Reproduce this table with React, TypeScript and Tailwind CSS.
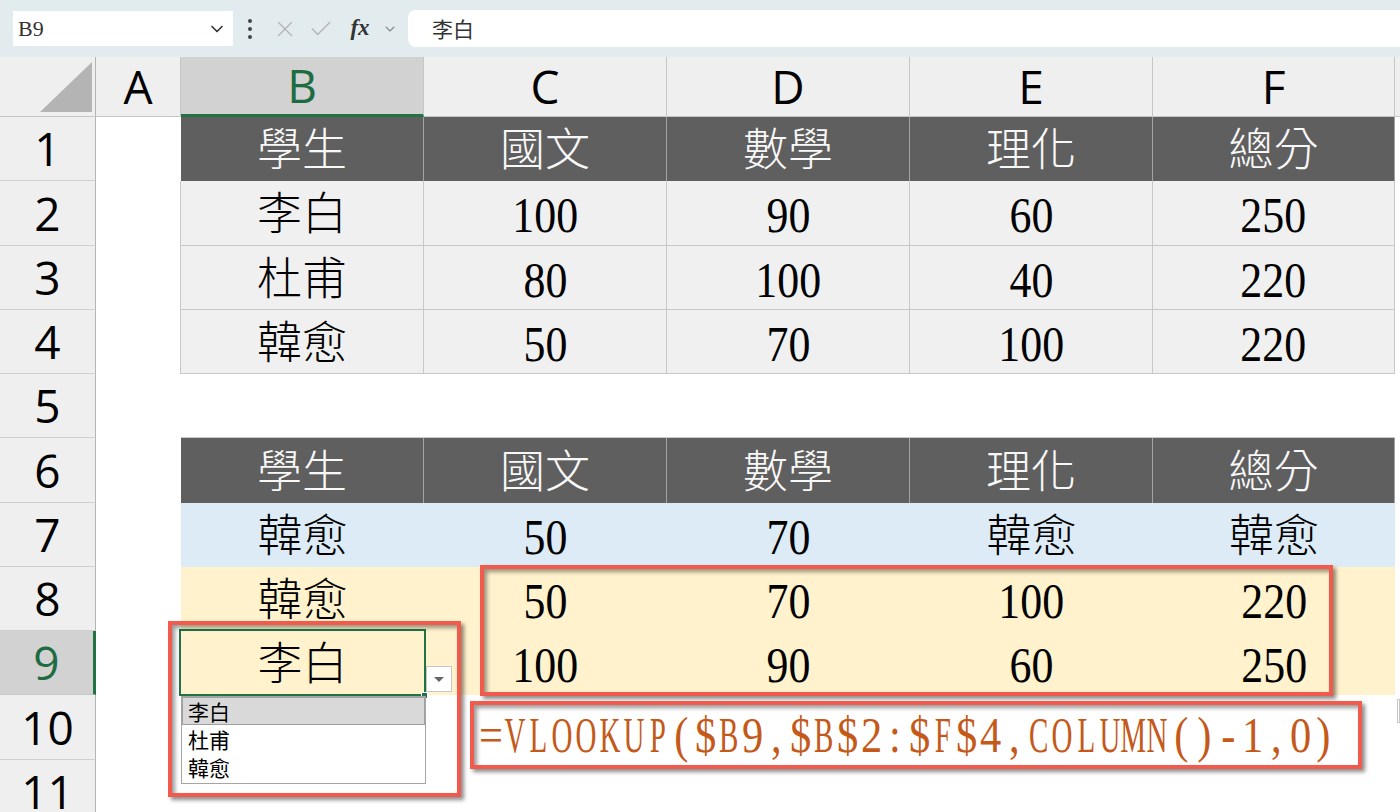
import React from "react";
import { Check, ChevronDown, X } from "lucide-react";

type Kind = "dark" | "gray" | "gap" | "blue" | "yellow" | "blank";

// rows 1..11 of the sheet
const rows: { kind: Kind; cells: string[] }[] = [
  { kind: "dark", cells: ["學生", "國文", "數學", "理化", "總分"] },
  { kind: "gray", cells: ["李白", "100", "90", "60", "250"] },
  { kind: "gray", cells: ["杜甫", "80", "100", "40", "220"] },
  { kind: "gray", cells: ["韓愈", "50", "70", "100", "220"] },
  { kind: "gap", cells: ["", "", "", "", ""] },
  { kind: "dark", cells: ["學生", "國文", "數學", "理化", "總分"] },
  { kind: "blue", cells: ["韓愈", "50", "70", "韓愈", "韓愈"] },
  { kind: "yellow", cells: ["韓愈", "50", "70", "100", "220"] },
  { kind: "yellow", cells: ["李白", "100", "90", "60", "250"] },
  { kind: "blank", cells: ["", "", "", "", ""] },
  { kind: "blank", cells: ["", "", "", "", ""] },
];

const cellClass: Record<Kind, string> = {
  dark: "bg-[#5f5f5f] text-[#f8f8f8] border-r border-[#a3a3a3]",
  gray: "bg-[#f0f0f0] text-black border-r border-b border-[#c8c8c8]",
  gap: "bg-white border-b border-[#c8c8c8]",
  blue: "bg-[#ddebf7] text-black",
  yellow: "bg-[#fff2cc] text-black",
  blank: "bg-white",
};

const colLetters = ["A", "B", "C", "D", "E", "F"];
const FORMULA = "=VLOOKUP($B9,$B$2:$F$4,COLUMN()-1,0)";

function Val({ v }: { v: string }) {
  if (!v) return null;
  if (/^\d+$/.test(v)) {
    return <span className="inline-block scale-x-[0.86] text-[51px] leading-none">{v}</span>;
  }
  return <span className="text-[45px] leading-none font-light">{v}</span>;
}

function FormulaBar() {
  return (
    <div className="h-[57px] bg-[#e2ebee] flex items-center">
      <div className="ml-[13px] w-[220px] h-[35px] bg-white flex items-center justify-between pl-[5px] pr-[6px]">
        <span className="font-['Liberation_Serif'] text-[22px] text-[#333]">B9</span>
        <ChevronDown size={20} strokeWidth={2} className="text-[#333]" />
      </div>
      <div className="w-[34px] flex flex-col items-center gap-[4px]">
        <span className="w-[4px] h-[4px] rounded-full bg-[#444]" />
        <span className="w-[4px] h-[4px] rounded-full bg-[#444]" />
        <span className="w-[4px] h-[4px] rounded-full bg-[#444]" />
      </div>
      <div className="w-[36px] flex justify-center">
        <X size={26} strokeWidth={1.3} className="text-[#b5b5b5]" />
      </div>
      <div className="w-[36px] flex justify-center">
        <Check size={26} strokeWidth={1.3} className="text-[#b5b5b5]" />
      </div>
      <div className="w-[42px] flex justify-center">
        <span className="font-['Liberation_Serif'] italic font-bold text-[23px] text-[#333]">fx</span>
      </div>
      <div className="w-[17px] flex justify-center">
        <ChevronDown size={16} strokeWidth={1.6} className="text-[#888]" />
      </div>
      <div className="ml-[10px] flex-1 h-[37px] bg-white rounded-l-[8px] flex items-center pl-[24px]">
        <span className="font-['Noto_Sans_CJK_TC',sans-serif] text-[21px] text-[#333]">李白</span>
      </div>
    </div>
  );
}

function SelectedCell() {
  return (
    <div className="relative bg-[#fff2cc] flex items-center justify-center pt-[5px]">
      <Val v="李白" />
      <div className="absolute -left-[2px] -top-[2px] -right-[2px] -bottom-[1px] border-2 border-[#217346]" />
      <div className="absolute -right-[4px] -bottom-[4px] w-[7px] h-[7px] bg-[#217346] border border-white" />
      <div className="absolute left-[245px] top-[35px] w-[26px] h-[26px] bg-white border border-[#c8c8c8] flex items-center justify-center z-10">
        <span className="w-0 h-0 border-l-[5px] border-r-[5px] border-t-[5px] border-l-transparent border-r-transparent border-t-[#666]" />
      </div>
      <div className="absolute left-0 top-[65px] w-[245px] h-[88px] bg-white border border-[#a5a5a5] z-10 font-['Noto_Sans_CJK_TC',sans-serif] text-[21px] leading-[28px] text-black">
        <div className="h-[28px] bg-[#d9d9d9] border border-[#a0a0a0] pl-[5px] leading-[26px]">李白</div>
        <div className="h-[28px] pl-[6px]">杜甫</div>
        <div className="h-[28px] pl-[6px]">韓愈</div>
      </div>
    </div>
  );
}

export default function App() {
  return (
    <div className="relative w-[1400px] h-[812px] overflow-hidden bg-white font-['Liberation_Serif','Noto_Sans_CJK_TC',serif]">
      <FormulaBar />

      <div className="grid grid-cols-[96px_85px_243px_243px_243px_243px_242px_5px] grid-rows-[60px_64px_65px_64px_64px_64px_65px_64px_64px_64px_65px_64px]">
        {/* column headers */}
        <div className="relative bg-[#efefef] border-r border-b border-r-[#b4b4b4] border-b-[#c6c6c6]">
          <svg className="absolute left-0 top-0" width="96" height="60">
            <polygon points="40,55 92,55 92,5" fill="#b4b4b4" />
          </svg>
        </div>
        {colLetters.map((c) =>
          c === "B" ? (
            <div
              key={c}
              className="flex items-center justify-center bg-[#d2d2d2] border-r border-r-[#c6c6c6] border-b-[3px] border-b-[#217346] font-['Open_Sans'] text-[46px] text-[#1e6c41]"
            >
              {c}
            </div>
          ) : (
            <div
              key={c}
              className="flex items-center justify-center bg-[#efefef] border-r border-b border-[#c6c6c6] font-['Open_Sans'] text-[46px] text-black"
            >
              {c}
            </div>
          )
        )}
        <div className="bg-[#efefef] border-b border-[#c6c6c6]" />

        {rows.map((r, i) => {
          const n = i + 1;
          return (
            <React.Fragment key={n}>
              {n === 9 ? (
                <div className="flex items-center justify-center bg-[#d2d2d2] border-b border-b-[#c6c6c6] border-r-[3px] border-r-[#217346] font-['Open_Sans'] text-[46px] text-[#1e6c41]">
                  {n}
                </div>
              ) : (
                <div className="flex items-center justify-center bg-[#efefef] border-b border-r border-b-[#d0d0d0] border-r-[#b4b4b4] font-['Open_Sans'] text-[46px] text-black">
                  {n}
                </div>
              )}
              {r.kind === "gray" ? (
                <div className="bg-white border-r border-[#c8c8c8]" />
              ) : (
                <div className="bg-white" />
              )}
              {r.cells.map((v, j) =>
                n === 9 && j === 0 ? (
                  <SelectedCell key={j} />
                ) : (
                  <div key={j} className={`flex items-center justify-center pt-[5px] ${cellClass[r.kind]}`}>
                    <Val v={v} />
                  </div>
                )
              )}
              <div className="bg-white">
                {n === 10 && <div className="mt-[4px] ml-[2px] h-[24px] border border-[#c6c6c6]" />}
              </div>
            </React.Fragment>
          );
        })}
      </div>

      {/* annotation boxes */}
      <div className="absolute left-[168px] top-[621px] w-[293px] h-[176px] border-4 border-[#f05b4e] shadow-[3px_3px_4px_rgba(0,0,0,0.45),inset_3px_3px_4px_rgba(0,0,0,0.4)] z-20 pointer-events-none" />
      <div className="absolute left-[480px] top-[565px] w-[853px] h-[131px] border-4 border-[#f05b4e] shadow-[3px_3px_4px_rgba(0,0,0,0.45),inset_3px_3px_4px_rgba(0,0,0,0.4)] z-20 pointer-events-none" />
      <div className="absolute left-[470px] top-[701px] w-[892px] h-[68px] border-4 border-[#f05b4e] bg-white shadow-[3px_3px_4px_rgba(0,0,0,0.45),inset_3px_3px_4px_rgba(0,0,0,0.4)] z-20 flex items-center pl-[5px] text-[50px] leading-none text-[#c4591a]">
        {FORMULA.split("").map((ch, i) => (
          <span key={i} className="inline-flex w-[23.8px] justify-center">
            {/[A-Z]/.test(ch) ? (
              <span className="inline-block scale-x-[0.58]">{ch}</span>
            ) : (
              <span className="inline-block scale-x-[0.85]">{ch}</span>
            )}
          </span>
        ))}
      </div>
    </div>
  );
}
